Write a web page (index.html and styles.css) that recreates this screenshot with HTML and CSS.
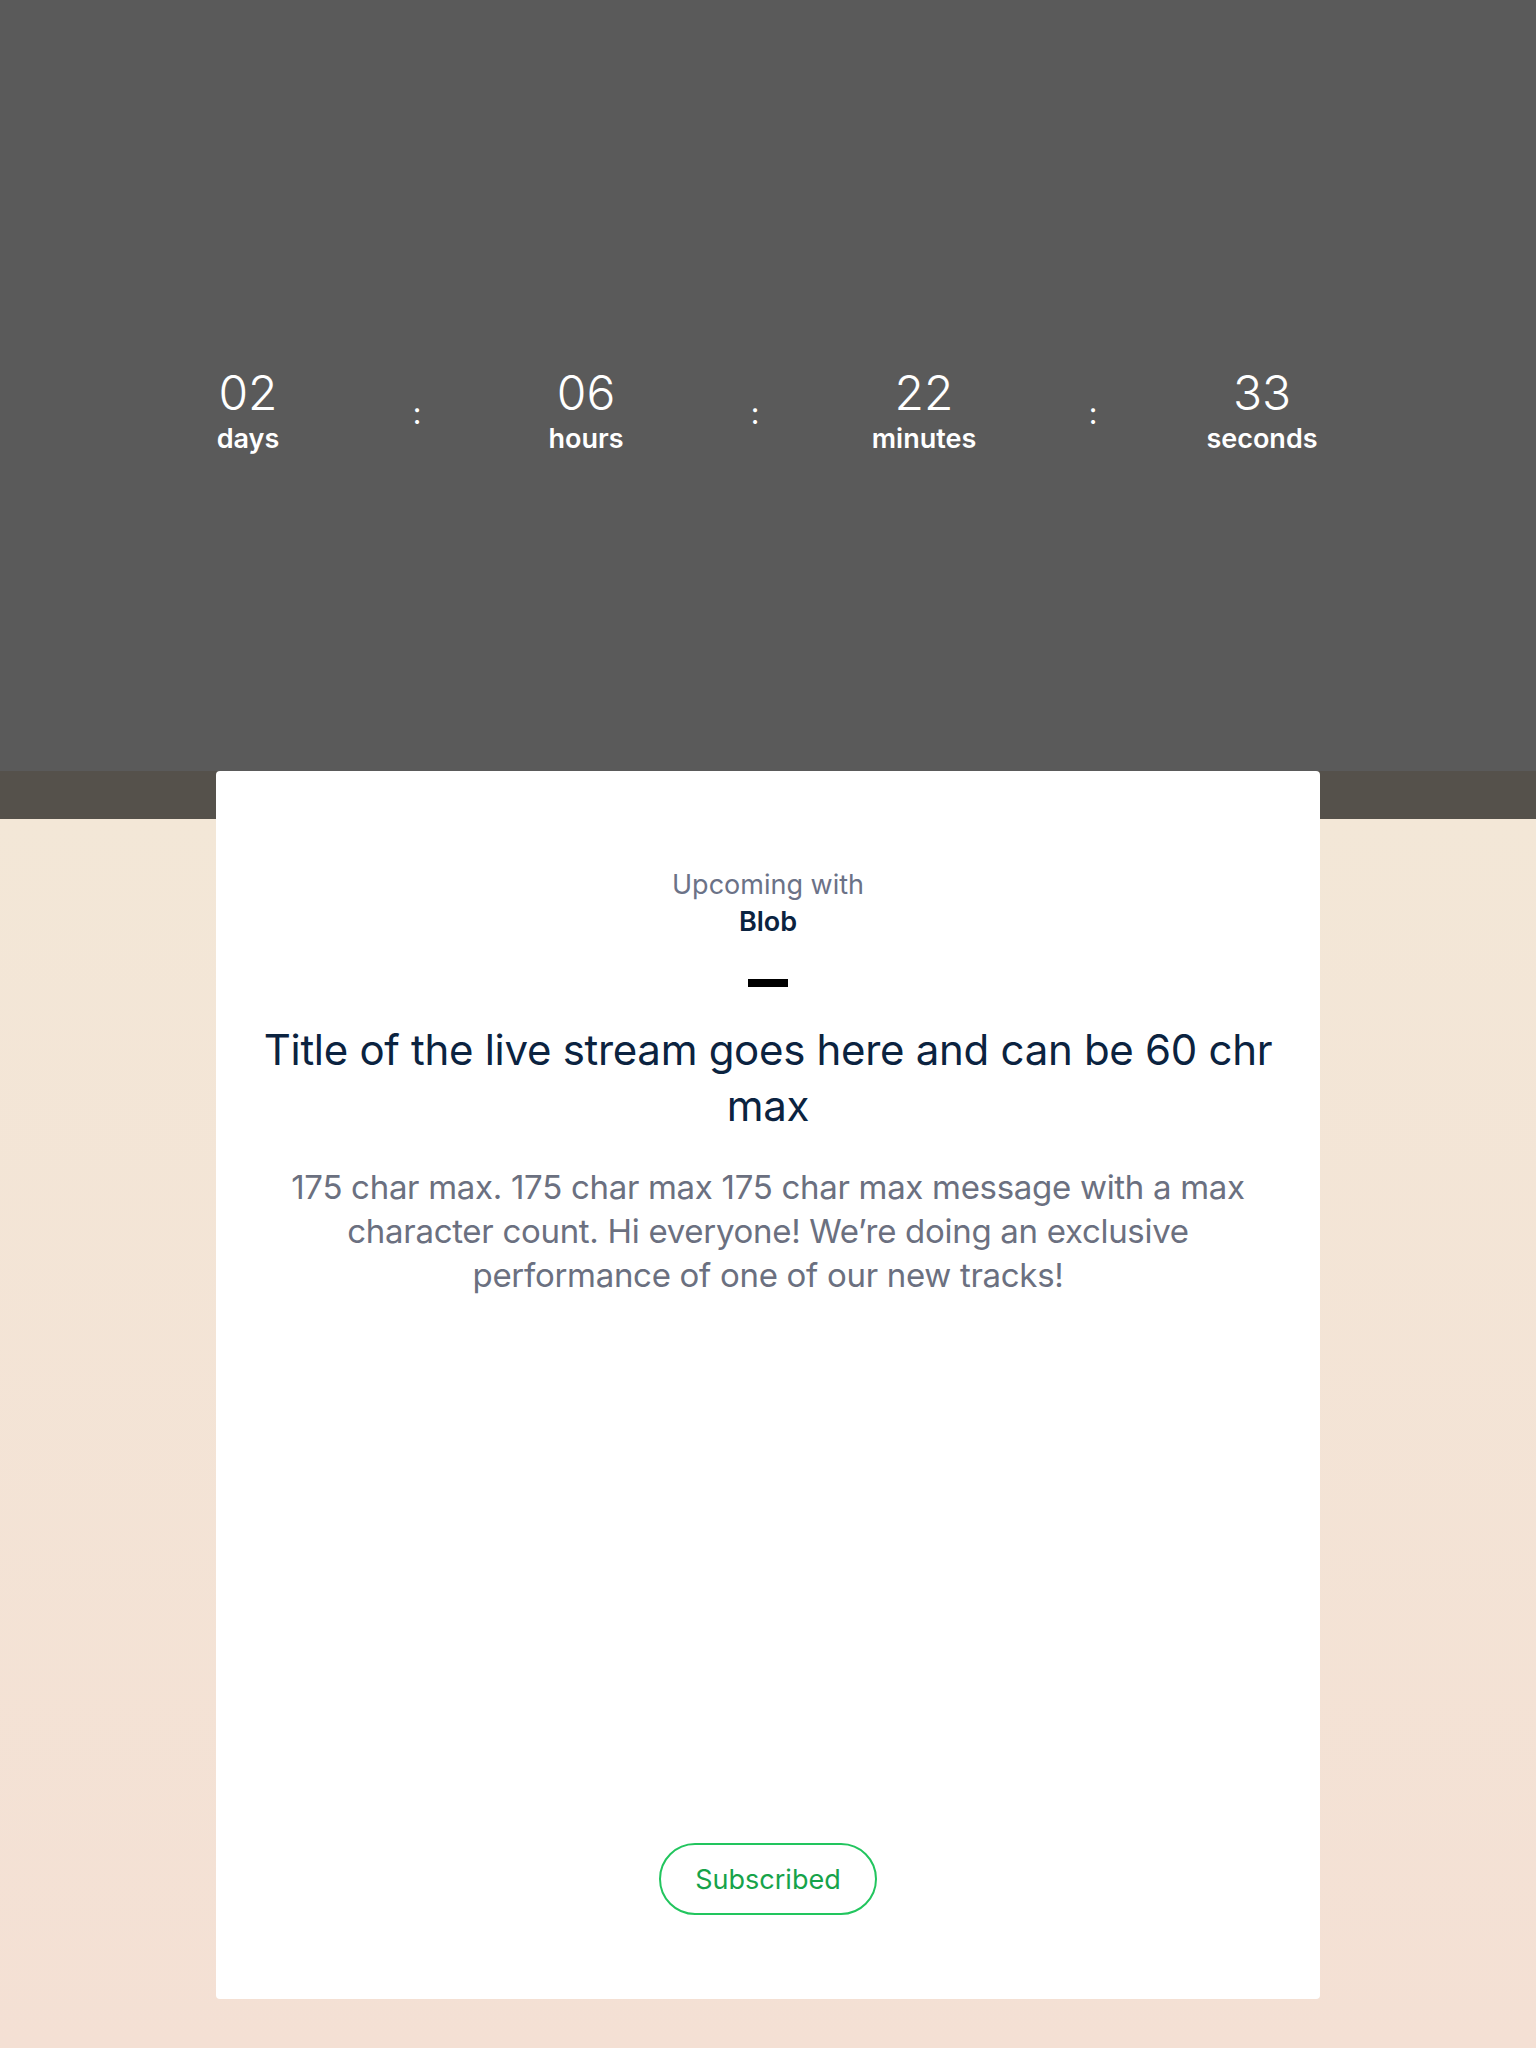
FILE: index.html
```html
<!DOCTYPE html>
<html lang="en">
<head>
<meta charset="utf-8">
<title>Upcoming live stream</title>
<link rel="stylesheet" href="styles.css">
</head>
<body>
<header class="hero">
  <div class="countdown">
    <div class="unit"><span class="num">02</span><span class="label">days</span></div>
    <div class="sep">:</div>
    <div class="unit"><span class="num">06</span><span class="label">hours</span></div>
    <div class="sep">:</div>
    <div class="unit"><span class="num">22</span><span class="label">minutes</span></div>
    <div class="sep">:</div>
    <div class="unit"><span class="num">33</span><span class="label">seconds</span></div>
  </div>
</header>
<main class="stage">
  <section class="card">
    <p class="kicker">Upcoming with</p>
    <p class="artist">Blob</p>
    <div class="dash"></div>
    <h1 class="title">Title of the live stream goes here and can be 60 chr max</h1>
    <p class="desc">175 char max. 175 char max 175 char max message with a max character count. Hi everyone! We’re doing an exclusive performance of one of our new tracks!</p>
    <button class="sub-btn" type="button">Subscribed</button>
  </section>
</main>
</body>
</html>
```
FILE: styles.css
```css
* { box-sizing: border-box; }
html, body { margin: 0; padding: 0; }
body {
  width: 1536px;
  font-family: Inter, "Noto Sans", sans-serif;
  background: #f4e0d4;
}
.hero {
  height: 771px;
  background: #5a5a5a;
  padding-top: 367px;
}
.countdown {
  display: flex;
  margin-left: 188px;
  width: 1134px;
  color: #ffffff;
}
.unit {
  width: 120px;
  display: flex;
  flex-direction: column;
  align-items: center;
}
.num {
  font-family: Inter, "Noto Sans", sans-serif;
  font-weight: 300;
  font-size: 48px;
  line-height: 52px;
}
.label {
  font-family: Inter, sans-serif;
  font-weight: 600;
  font-size: 27px;
  line-height: 34px;
  margin-top: 3px;
}
.sep {
  width: 218px;
  text-align: center;
  font-family: Inter, sans-serif;
  font-size: 30px;
  line-height: 36px;
  padding-top: 28px;
}
.stage {
  background: linear-gradient(to bottom, #55514b 0, #55514b 48px, #f3e7d7 48px, #f4e0d4 100%);
  padding-bottom: 49px;
}
.card {
  width: 1104px;
  height: 1228px;
  margin: 0 auto;
  background: #ffffff;
  border-radius: 4px;
  padding: 96px 24px 84px;
  display: flex;
  flex-direction: column;
  align-items: center;
  text-align: center;
}
.kicker {
  margin: 0;
  font-size: 27px;
  line-height: 36px;
  color: #6b7287;
}
.artist {
  margin: 0;
  font-size: 27px;
  line-height: 38px;
  font-weight: 600;
  color: #0b2340;
}
.dash {
  width: 40px;
  height: 8px;
  background: #000000;
  margin-top: 38px;
}
.title {
  margin: 35px 0 0;
  max-width: 1040px;
  font-size: 42px;
  line-height: 56px;
  font-weight: 400;
  color: #0b2340;
  letter-spacing: -0.3px;
}
.desc {
  margin: 31px 0 0;
  max-width: 1000px;
  font-size: 33px;
  line-height: 44px;
  color: #6b7080;
  letter-spacing: -0.3px;
}
.sub-btn {
  margin-top: auto;
  width: 218px;
  height: 72px;
  border: 2px solid #22c55e;
  border-radius: 36px;
  background: #ffffff;
  color: #16a34a;
  font-family: Inter, sans-serif;
  font-size: 27px;
  padding: 0;
}
```
